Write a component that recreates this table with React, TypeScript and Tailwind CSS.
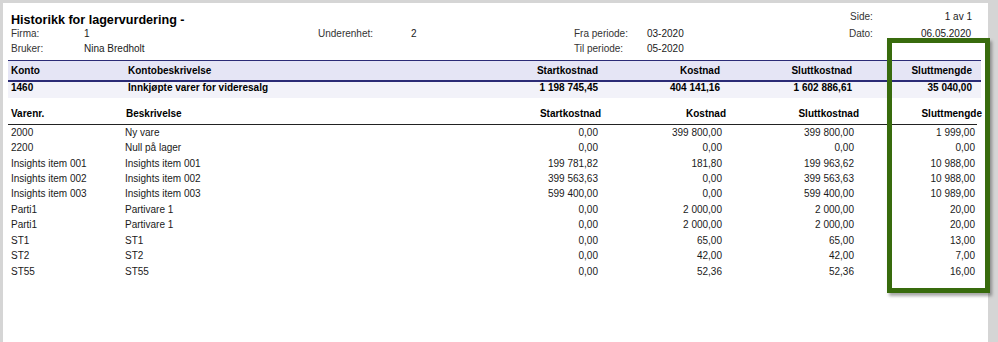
import React from "react";

const rows: [string, string, string, string, string, string][] = [
  ["2000", "Ny vare", "0,00", "399 800,00", "399 800,00", "1 999,00"],
  ["2200", "Null på lager", "0,00", "0,00", "0,00", "0,00"],
  ["Insights item 001", "Insights item 001", "199 781,82", "181,80", "199 963,62", "10 988,00"],
  ["Insights item 002", "Insights item 002", "399 563,63", "0,00", "399 563,63", "10 988,00"],
  ["Insights item 003", "Insights item 003", "599 400,00", "0,00", "599 400,00", "10 989,00"],
  ["Parti1", "Partivare 1", "0,00", "2 000,00", "2 000,00", "20,00"],
  ["Parti1", "Partivare 1", "0,00", "2 000,00", "2 000,00", "20,00"],
  ["ST1", "ST1", "0,00", "65,00", "65,00", "13,00"],
  ["ST2", "ST2", "0,00", "42,00", "42,00", "7,00"],
  ["ST55", "ST55", "0,00", "52,36", "52,36", "16,00"],
];

export default function App() {
  return (
    <div
      className="relative h-[342px] w-[998px] overflow-hidden bg-[#d5d5d5] pl-[3px] pt-[3px] text-[10px] text-[#1a1a1a]"
      style={{ fontFamily: '"Liberation Sans", Arial, sans-serif' }}
    >
      <div className="h-[360px] w-[985px] bg-white pt-[9px]">
        {/* Header */}
        <div className="flex h-[15px] items-start pl-[8px]">
          <div className="text-[12.6px] font-bold leading-[16px] text-black">Historikk for lagervurdering -</div>
          <div className="ml-auto flex pr-[16px] leading-[10px] text-[#333]">
            <div className="w-[72px]">Side:</div>
            <div className="w-[50px] text-right text-[#1a1a1a]">1 av 1</div>
          </div>
        </div>
        <div className="flex h-[14px] items-center pl-[8px] leading-[14px]">
          <div className="w-[73px] text-[#333]">Firma:</div>
          <div className="w-[234px]">1</div>
          <div className="w-[93px] text-[#333]">Underenhet:</div>
          <div className="w-[163px]">2</div>
          <div className="w-[73px] text-[#333]">Fra periode:</div>
          <div className="w-[202px]">03-2020</div>
          <div className="w-[72px] text-[#333]">Dato:</div>
          <div className="w-[50px] text-right">06.05.2020</div>
        </div>
        <div className="flex h-[15px] items-center pl-[8px] leading-[14px]">
          <div className="w-[73px] text-[#333]">Bruker:</div>
          <div className="w-[234px]">Nina Bredholt</div>
          <div className="w-[93px]" />
          <div className="w-[163px]" />
          <div className="w-[73px] text-[#333]">Til periode:</div>
          <div className="w-[202px]">05-2020</div>
        </div>

        {/* Account band */}
        <div className="ml-[5px] mt-[4px] w-[973px]">
          <div className="flex h-[20px] items-center border-t border-[#2b2b76] bg-[#e5e5f5] font-bold leading-[12px] text-black">
            <div className="w-[120px] pl-[3px]">Konto</div>
            <div className="w-[352px]">Kontobeskrivelse</div>
            <div className="w-[118px] text-right">Startkostnad</div>
            <div className="w-[122px] text-right">Kostnad</div>
            <div className="w-[132px] text-right">Sluttkostnad</div>
            <div className="w-[120px] text-right">Sluttmengde</div>
          </div>
          <div className="h-[2px] bg-[#2b2b76]" />
          <div className="flex h-[16px] items-start bg-[#f2f2f9] font-bold leading-[12px] text-black">
            <div className="w-[120px] pl-[3px]">1460</div>
            <div className="w-[352px]">Innkjøpte varer for videresalg</div>
            <div className="w-[118px] text-right">1 198 745,45</div>
            <div className="w-[122px] text-right">404 141,16</div>
            <div className="w-[132px] text-right">1 602 886,61</div>
            <div className="w-[120px] text-right">35 040,00</div>
          </div>
        </div>

        {/* Item header */}
        <div className="ml-[5px] w-[969px]">
          <div className="flex h-[27px] items-end border-b border-[#222] pb-[3px] font-bold leading-[14px] text-black">
            <div className="w-[118px] shrink-0 pl-[3px]">Varenr.</div>
            <div className="w-[354px] shrink-0">Beskrivelse</div>
            <div className="w-[121px] shrink-0 text-right">Startkostnad</div>
            <div className="w-[125px] shrink-0 text-right">Kostnad</div>
            <div className="w-[133px] shrink-0 text-right">Sluttkostnad</div>
            <div className="w-[123px] shrink-0 whitespace-nowrap text-right">Sluttmengde</div>
          </div>
          {rows.map((r, i) => (
            <div key={i} className="flex h-[15.45px] items-center leading-[14px]">
              <div className="w-[117px] shrink-0 pl-[3px]">{r[0]}</div>
              <div className="w-[355px] shrink-0">{r[1]}</div>
              <div className="w-[118px] shrink-0 text-right">{r[2]}</div>
              <div className="w-[124px] shrink-0 text-right">{r[3]}</div>
              <div className="w-[132px] shrink-0 text-right">{r[4]}</div>
              <div className="w-[121px] shrink-0 text-right">{r[5]}</div>
            </div>
          ))}
        </div>
      </div>

      {/* Highlight box */}
      <div className="absolute left-[887px] top-[38px] h-[255px] w-[103px] border-[5px] border-[#386b0d] shadow-[2px_3px_3px_rgba(0,0,0,0.35)]" />
    </div>
  );
}
